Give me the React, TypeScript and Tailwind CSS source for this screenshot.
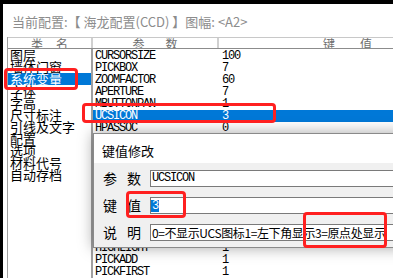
const categories = ["图层", "墙体门窗", "系统变量", "字体", "字高", "尺寸标注", "引线及文字", "配置", "选项", "材料代号", "自动存档"]

const variables: [string, string][] = [
  ["CURSORSIZE", "100"],
  ["PICKBOX", "7"],
  ["ZOOMFACTOR", "60"],
  ["APERTURE", "7"],
  ["MBUTTONPAN", "1"],
  ["UCSICON", "3"],
  ["HPASSOC", "0"],
  ["DIMASSOC", "2"],
  ["LTSCALE", "1"],
  ["OSMODE", "4133"],
  ["ORTHOMODE", "0"],
  ["GRIPSIZE", "5"],
  ["GRIPS", "1"],
  ["PICKSTYLE", "1"],
  ["PICKAUTO", "1"],
  ["PICKDRAG", "0"],
  ["HIGHLIGHT", "1"],
  ["PICKADD", "1"],
  ["PICKFIRST", "1"],
]

const mono = "font-['Liberation_Mono',monospace] text-[12px] tracking-[-1.2px]"

function Label({ a, b }: { a: string; b: string }) {
  return (
    <div className="flex w-[38px] justify-between text-[14px] leading-[17px] text-black">
      <span>{a}</span>
      <span>{b}</span>
    </div>
  )
}

function EditDialog() {
  return (
    <div className="absolute left-[90px] top-[129px] flex h-[115px] w-[320px] flex-col border border-[#8a8a8a] shadow-[0_0_14px_rgba(0,0,0,0.35)]">
      <div className="flex h-[29px] items-center bg-white pl-[8px] pt-[4px] text-[13px] text-black">键值修改</div>
      <div className="flex flex-1 flex-col gap-[10px] bg-[#f0f0f0] pl-[9px] pt-[7px]">
        <div className="flex items-center">
          <Label a="参" b="数" />
          <div className={`ml-[9px] h-[17px] flex-1 border border-[#7a7a7a] bg-white pl-[1px] leading-[15px] text-black ${mono}`}>
            UCSICON
          </div>
        </div>
        <div className="flex items-center">
          <Label a="键" b="值" />
          <div className={`ml-[9px] flex h-[17px] flex-1 items-center border border-[#7a7a7a] bg-white ${mono}`}>
            <span className="bg-[#0078d7] px-[1px] leading-[12px] text-white">3</span>
          </div>
        </div>
        <div className="flex items-center">
          <Label a="说" b="明" />
          <div className="ml-[9px] h-[17px] flex-1 whitespace-nowrap border border-[#7a7a7a] bg-white pl-[1px] text-[12px] leading-[15px] tracking-[-0.4px] text-black">
            0=不显示UCS图标1=左下角显示3=原点处显示
          </div>
        </div>
      </div>
    </div>
  )
}

export default function App() {
  return (
    <div className="relative h-[278px] w-[393px] overflow-hidden bg-black pl-[3px] pt-[4px] font-['Noto_Sans_CJK_SC',sans-serif]">
      <div className="relative h-full bg-white">
        <div className="h-[33px] whitespace-nowrap pl-[9px] pt-[9px] text-[13px] leading-[17px] text-[#8c8c8c]">
          当前配置:【 海龙配置(CCD) 】图幅: {"<A2>"}
        </div>

        <div className="ml-[4px] border-l border-[#a0a0a0]">
          <div className="flex h-[12px] overflow-hidden border-b border-t border-b-[#8c8c8c] border-t-[#c8c8c8] text-[12px] leading-[11px] text-[#6e6e6e]">
            <div className="flex w-[85px] justify-center gap-[13px] border-r-2 border-[#d0d0d0]">
              <span>类</span>
              <span>名</span>
            </div>
            <div className="flex w-[126px] justify-center gap-[21px] border-r-2 border-[#d0d0d0]">
              <span>参</span>
              <span>数</span>
            </div>
            <div className="flex flex-1 gap-[25px] pl-[104px]">
              <span>键</span>
              <span>值</span>
            </div>
          </div>

          <div className="flex h-[229px]">
            <div className="w-[85px] border-r-2 border-[#a0a0a0]">
              {categories.map((c) => (
                <div
                  key={c}
                  className={`h-[12px] whitespace-nowrap pl-[2px] text-[13px] leading-[12px] ${
                    c === "系统变量" ? "bg-[#0078d7] text-white" : "text-black"
                  }`}
                >
                  {c}
                </div>
              ))}
            </div>
            <div className="flex-1 pt-[1px]">
              {variables.map(([name, value]) => (
                <div
                  key={name}
                  className={`flex h-[12px] leading-[12px] ${mono} ${
                    name === "UCSICON" ? "bg-[#0078d7] text-white" : "text-black"
                  }`}
                >
                  <span className="w-[129px] pl-[2px]">{name}</span>
                  <span>{value}</span>
                </div>
              ))}
            </div>
          </div>
        </div>

        <EditDialog />
      </div>

      <div className="absolute left-[4px] top-[68px] h-[22px] w-[74px] rounded-[4px] border-[3px] border-[#ff2020]" />
      <div className="absolute left-[82px] top-[103px] h-[20px] w-[194px] rounded-[4px] border-[3px] border-[#ff2020]" />
      <div className="absolute left-[126px] top-[191px] h-[27px] w-[60px] rounded-[4px] border-[3px] border-[#ff2020]" />
      <div className="absolute left-[303px] top-[212px] h-[36px] w-[84px] rounded-[4px] border-[3px] border-[#ff2020]" />
    </div>
  )
}
